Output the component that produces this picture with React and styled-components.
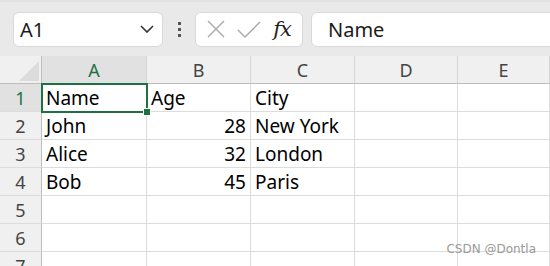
import React from 'react'
import styled, { createGlobalStyle } from 'styled-components';

const Global = createGlobalStyle`
  html, body {
    margin: 0;
    padding: 0;
    background: #ffffff;
    overflow: hidden;
  }
`;

const Page = styled.div`
  width: 550px;
  height: 266px;
  overflow: hidden;
  position: relative;
  font-family: "Noto Sans", "Open Sans", sans-serif;
`;

const Toolbar = styled.div`
  height: 56px;
  background: #e9e9e9;
  border-top: 2px solid #e2e2e2;
  box-sizing: border-box;
  display: flex;
  align-items: center;
  padding-left: 13px;
  overflow: hidden;
  & > * {
    flex-shrink: 0;
  }
`;

const NameBox = styled.div`
  width: 150px;
  height: 35px;
  box-sizing: border-box;
  background: #fff;
  border: 1px solid #d9d9d9;
  border-radius: 6px;
  display: flex;
  align-items: center;
  justify-content: space-between;
  padding: 0 8px 0 6px;
  font-size: 20px;
  color: #1a1a1a;
`;

const Dots = styled.div`
  width: 32px;
  display: flex;
  flex-direction: column;
  align-items: center;
  gap: 3px;
  span {
    width: 3px;
    height: 3px;
    background: #555;
  }
`;

const FormulaButtons = styled.div`
  width: 108px;
  height: 35px;
  box-sizing: border-box;
  background: #fff;
  border: 1px solid #d9d9d9;
  border-radius: 6px;
  display: flex;
  align-items: center;
  padding: 0 6px 0 5px;
`;

const IconSlot = styled.div`
  width: ${p => p.w}px;
  display: flex;
  justify-content: center;
  align-items: center;
`;

const Fx = styled.span`
  font-family: "DejaVu Serif", "Liberation Serif", serif;
  font-style: italic;
  font-size: 21px;
  color: #222;
  letter-spacing: -1px;
`;

const FormulaInput = styled.div`
  margin-left: 8px;
  width: 260px;
  height: 35px;
  box-sizing: border-box;
  background: #fff;
  border: 1px solid #d9d9d9;
  border-radius: 6px;
  display: flex;
  align-items: center;
  padding-left: 16px;
  font-size: 20px;
  color: #1a1a1a;
`;

const Sheet = styled.div`
  position: relative;
  display: grid;
  grid-template-columns: 42px 105px 104px 104px 103px 1fr;
  grid-template-rows: 28px;
  grid-auto-rows: 28px;
`;

const Corner = styled.div`
  position: relative;
  background: #f0f0f0;
  border-right: 1px solid #bdbdbd;
  border-bottom: 1px solid #bdbdbd;
  box-sizing: border-box;
  &::after {
    content: "";
    position: absolute;
    right: 2px;
    bottom: 2px;
    width: 0;
    height: 0;
    border-left: 20px solid transparent;
    border-bottom: 20px solid #dcdcdc;
  }
`;

const ColHead = styled.div`
  background: ${p => (p.active ? '#e1e1e1' : '#f0f0f0')};
  color: ${p => (p.active ? '#1e7145' : '#444')};
  border-right: 1px solid #d6d6d6;
  border-bottom: 1px solid #bdbdbd;
  box-sizing: border-box;
  display: flex;
  align-items: center;
  justify-content: center;
  font-size: 18px;
`;

const RowHead = styled.div`
  background: ${p => (p.active ? '#e1e1e1' : '#f0f0f0')};
  color: ${p => (p.active ? '#1e7145' : '#444')};
  border-right: 1px solid #bdbdbd;
  border-bottom: 1px solid #dcdcdc;
  box-sizing: border-box;
  display: flex;
  align-items: center;
  justify-content: center;
  font-size: 18px;
`;

const Cell = styled.div`
  border-right: 1px solid #dcdcdc;
  border-bottom: 1px solid #dcdcdc;
  box-sizing: border-box;
  display: flex;
  align-items: center;
  justify-content: ${p => (p.num ? 'flex-end' : 'flex-start')};
  padding: 1px 4px 0;
  font-size: 19px;
  color: #000;
  white-space: nowrap;
`;

const Selection = styled.div`
  position: absolute;
  left: 41px;
  top: 27px;
  width: 107px;
  height: 30px;
  box-sizing: border-box;
  border: 2px solid #1e7145;
  pointer-events: none;
  &::after {
    content: "";
    position: absolute;
    right: -5px;
    bottom: -5px;
    width: 6px;
    height: 6px;
    background: #1e7145;
    border: 1px solid #fff;
  }
`;

const Watermark = styled.div`
  position: absolute;
  right: 14px;
  bottom: 10px;
  font-family: "DejaVu Sans", sans-serif;
  font-size: 12px;
  color: #9a9a9a;
`;

const cols = ['A', 'B', 'C', 'D', 'E'];
const data = [
  ['Name', 'Age', 'City'],
  ['John', 28, 'New York'],
  ['Alice', 32, 'London'],
  ['Bob', 45, 'Paris'],
  [], [], [],
];

const App = () => {
  return (
    <Page>
      <Global />
      <Toolbar>
        <NameBox>
          <span>A1</span>
          <svg width="14" height="8" viewBox="0 0 14 8">
            <polyline points="1,1 7,7 13,1" fill="none" stroke="#333" strokeWidth="1.6" />
          </svg>
        </NameBox>
        <Dots><span /><span /><span /></Dots>
        <FormulaButtons>
          <IconSlot w={30}>
            <svg width="18" height="18" viewBox="0 0 18 18">
              <path d="M1 1 L17 17 M17 1 L1 17" stroke="#a8a8a8" strokeWidth="1.4" fill="none" />
            </svg>
          </IconSlot>
          <IconSlot w={38}>
            <svg width="24" height="17" viewBox="0 0 24 17">
              <polyline points="1,9 8,16 23,1" stroke="#a8a8a8" strokeWidth="1.4" fill="none" />
            </svg>
          </IconSlot>
          <IconSlot w={28}>
            <Fx>fx</Fx>
          </IconSlot>
        </FormulaButtons>
        <FormulaInput>Name</FormulaInput>
      </Toolbar>
      <Sheet>
        <Corner />
        {cols.map(c => (
          <ColHead key={c} active={c === 'A'}>{c}</ColHead>
        ))}
        {data.map((row, r) => (
          <React.Fragment key={r}>
            <RowHead active={r === 0}>{r + 1}</RowHead>
            {cols.map((c, i) => {
              const v = row[i];
              return (
                <Cell key={c} num={typeof v === 'number'}>{v}</Cell>
              );
            })}
          </React.Fragment>
        ))}
        <Selection />
      </Sheet>
      <Watermark>CSDN @Dontla</Watermark>
    </Page>
  );
}

export default App;
